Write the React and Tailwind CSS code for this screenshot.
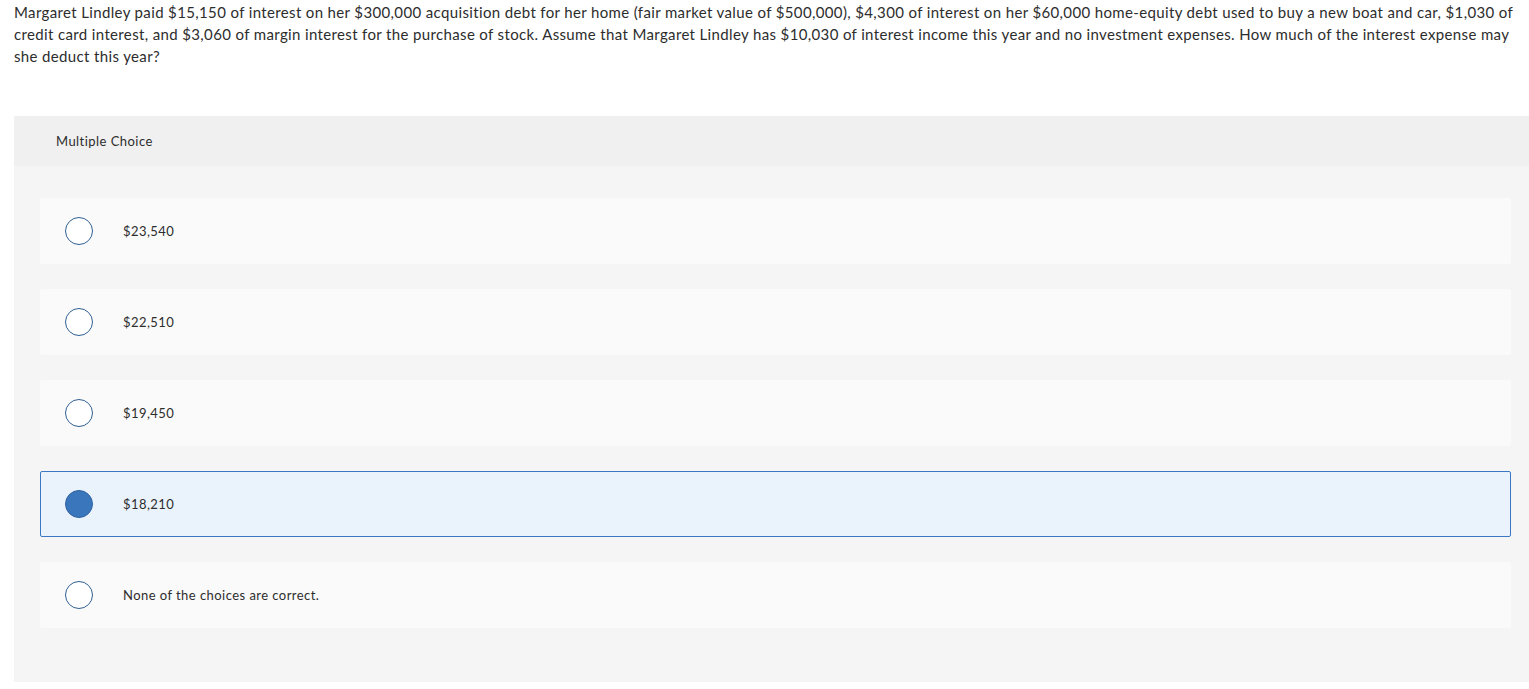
const choices = [
  { id: 'a', label: '$23,540' },
  { id: 'b', label: '$22,510' },
  { id: 'c', label: '$19,450' },
  { id: 'd', label: '$18,210', selected: true },
  { id: 'e', label: 'None of the choices are correct.' },
];

const Radio = ({ selected }) =>
  selected ? (
    <span className="block h-[28px] w-[28px] rounded-full border border-[#2f62a0] bg-[#3a76bb]" />
  ) : (
    <span className="block h-[28px] w-[28px] rounded-full border-[1.5px] border-[#2f5f93] bg-white" />
  );

export default function App() {
  return (
    <div className="min-h-[689px] bg-white font-['Lato',sans-serif] text-[#2d2d2d]">
      <p className="pl-[14px] pr-[6px] pt-px text-[15px] leading-[22px] tracking-[0.36px]">
        Margaret Lindley paid $15,150 of interest on her $300,000 acquisition debt for her home (fair market value of $500,000), $4,300 of interest on her $60,000 home-equity debt used to buy a new boat and car, $1,030 of credit card interest, and $3,060 of margin interest for the purchase of stock. Assume that Margaret Lindley has $10,030 of interest income this year and no investment expenses. How much of the interest expense may she deduct this year?
      </p>

      <div className="ml-[14px] mt-[49px] bg-[#f5f5f5]">
        <div className="flex h-[50px] items-center bg-[#f0f0f0] pl-[42px] pt-[2px] text-[13px] tracking-[0.45px]">
          Multiple Choice
        </div>
        <div className="flex flex-col gap-[25px] pb-[54px] pl-[26px] pr-[18px] pt-[32px]">
          {choices.map((c) => (
            <div
              key={c.id}
              className={
                c.selected
                  ? 'flex h-[66px] items-center rounded-[2px] border border-[#3a78c3] bg-[#eaf2fc] pl-[24px]'
                  : 'flex h-[66px] items-center rounded-[2px] border border-transparent bg-[#fafafa] pl-[24px]'
              }
            >
              <Radio selected={c.selected} />
              <span className="ml-[30px] pt-[2px] text-[13px] tracking-[0.45px]">{c.label}</span>
            </div>
          ))}
        </div>
      </div>
    </div>
  );
}
